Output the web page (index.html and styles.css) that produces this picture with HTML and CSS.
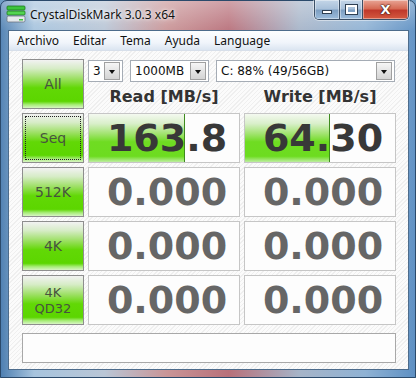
FILE: index.html
```html
<!DOCTYPE html>
<html lang="es">
<head>
  <meta charset="UTF-8">
  <title>CrystalDiskMark 3.0.3 x64</title>
  <link rel="stylesheet" href="styles.css">
</head>
<body>

  <div class="window">
    <div class="titlebar">
      <svg class="app-icon" width="20" height="18" viewBox="0 0 20 18">
        <rect x="1" y="1" width="18" height="4" rx="1" fill="#3cc43c" stroke="#1d7a1d" stroke-width="0.8"/>
        <rect x="1" y="6" width="18" height="4" rx="1" fill="#52d452" stroke="#1d7a1d" stroke-width="0.8"/>
        <rect x="1" y="11" width="18" height="6" rx="1.5" fill="#e4e8ec" stroke="#6a7580" stroke-width="0.8"/>
        <rect x="13" y="14" width="4" height="1.5" fill="#3cc43c"/>
      </svg>
      <span class="title">CrystalDiskMark 3.0.3 x64</span>
      <div class="caption-buttons">
        <div class="cap min"><span></span></div>
        <div class="cap max"><span></span></div>
        <div class="cap close">X</div>
      </div>
    </div>

    <div class="client">
      <div class="menubar">
        <span>Archivo</span>
        <span>Editar</span>
        <span>Tema</span>
        <span>Ayuda</span>
        <span>Language</span>
      </div>

      <div class="panel">
        <div class="grid">
          <div class="test-btn">All</div>
          <div class="options">
            <div class="selects">
              <div class="combo c-count"><span>3</span><i></i></div>
              <div class="combo c-size"><span>1000MB</span><i></i></div>
              <div class="combo c-drive"><span>C: 88% (49/56GB)</span><i></i></div>
            </div>
            <div class="headers">
              <div>Read [MB/s]</div>
              <div>Write [MB/s]</div>
            </div>
          </div>

          <div class="test-btn focus"><span>Seq</span></div>
          <div class="result done"><div class="bar" style="width:96px"></div><span>163.8</span></div>
          <div class="result done"><div class="bar" style="width:85px"></div><span>64.30</span></div>

          <div class="test-btn">512K</div>
          <div class="result"><span>0.000</span></div>
          <div class="result"><span>0.000</span></div>

          <div class="test-btn">4K</div>
          <div class="result"><span>0.000</span></div>
          <div class="result"><span>0.000</span></div>

          <div class="test-btn two">4K<br>QD32</div>
          <div class="result"><span>0.000</span></div>
          <div class="result"><span>0.000</span></div>
        </div>

        <div class="comment"></div>
      </div>
    </div>
  </div>

</body>
</html>
```

FILE: styles.css
```css
* {
  box-sizing: border-box;
}

body {
  margin: 0;
  width: 416px;
  height: 378px;
  overflow: hidden;
  background: #6f9cc4;
}

.window {
  width: 416px;
  height: 378px;
  padding: 29px 6px 9px 7px;
  border: 1px solid #2b4a6b;
  border-radius: 7px 7px 0 0;
  background:
    linear-gradient(180deg, rgba(255, 255, 255, 0.35) 0, rgba(255, 255, 255, 0.05) 30px, rgba(255, 255, 255, 0) 100%),
    linear-gradient(90deg, #4f80b2 0, #a7c4de 8%, #b9c6d6 25%, #c99597 40%, #b8707a 55%, #a6b4c8 72%, #8fb2d4 88%, #5e90c3 100%);
  position: relative;
}

/* title bar */

.titlebar {
  position: absolute;
  top: 0;
  left: 0;
  right: 0;
  height: 29px;
  display: flex;
  align-items: center;
  padding: 0 0 3px 5px;
}

.app-icon {
  flex: none;
}

.title {
  margin-left: 4px;
  font-family: "Noto Sans", sans-serif;
  font-size: 12px;
  color: #111;
  text-shadow: 0 0 6px rgba(255, 255, 255, 0.9), 0 0 3px rgba(255, 255, 255, 0.9);
}

.caption-buttons {
  position: absolute;
  top: -1px;
  right: 6px;
  display: flex;
  height: 20px;
  border: 1px solid #3b4f66;
  border-top: none;
  border-radius: 0 0 5px 5px;
  overflow: hidden;
  box-shadow: 0 0 0 1px rgba(255, 255, 255, 0.45);
}

.cap {
  display: flex;
  align-items: center;
  justify-content: center;
  height: 100%;
  border-left: 1px solid #3b4f66;
  box-shadow: inset 0 0 0 1px rgba(255, 255, 255, 0.4);
  background: linear-gradient(180deg, #c4d6e8 0, #a9c1da 45%, #7d9fc2 55%, #9bbcdc 100%);
}

.cap:first-child {
  border-left: none;
}

.min {
  width: 24px;
}

.min span {
  width: 10px;
  height: 4px;
  margin-top: 5px;
  background: #fff;
  border: 1px solid #2e3f52;
}

.max {
  width: 23px;
}

.max span {
  width: 11px;
  height: 9px;
  border: 2px solid #fff;
  outline: 1px solid #2e3f52;
}

.close {
  width: 46px;
  font-family: "DejaVu Sans", sans-serif;
  font-weight: bold;
  font-size: 13px;
  color: #fff;
  text-shadow: 0 0 1px #3a1a14, 0 0 1px #3a1a14, 0 0 2px #3a1a14;
  background: linear-gradient(180deg, #e8a595 0, #d66b55 45%, #c0392b 55%, #d45a40 100%);
}

/* client area */

.client {
  border: 1px solid #4d6c8c;
  height: 340px;
}

.menubar {
  height: 20px;
  display: flex;
  align-items: center;
  padding-left: 1px;
  background: linear-gradient(180deg, #fdfeff 0, #f1f5fb 60%, #dbe5f1 100%);
  border-bottom: 1px solid #d7dfea;
  font-family: "Noto Sans", sans-serif;
  font-size: 12px;
  color: #111;
}

.menubar span {
  padding: 0 7px;
}

.panel {
  height: 318px;
  padding: 8px 0 0 13px;
  background: repeating-linear-gradient(135deg, #fbfbfb 0, #fbfbfb 2px, #efefef 2px, #efefef 3px);
}

.grid {
  display: grid;
  grid-template-columns: 62px 152px 152px;
  grid-auto-rows: 50px;
  gap: 4px;
}

.test-btn {
  display: flex;
  align-items: center;
  justify-content: center;
  text-align: center;
  border: 1px solid #8e8e8e;
  background: linear-gradient(180deg, #f2f2f2 0, #d6ecc6 18%, #9fe068 38%, #62d806 58%, #5cd600 86%, #a6ec76 93%, #d8f5c4 100%);
  font-family: "DejaVu Sans", sans-serif;
  font-size: 14px;
  color: #47533f;
}

.test-btn.two {
  font-size: 13px;
  line-height: 16px;
  padding-top: 1px;
}

.test-btn.focus {
  position: relative;
}

.test-btn.focus::after {
  content: "";
  position: absolute;
  inset: 2px;
  border: 1px dotted #222;
}

.options {
  grid-column: span 2;
}

.selects {
  display: flex;
  gap: 7px;
  margin-top: 1px;
}

.combo {
  display: flex;
  align-items: center;
  height: 22px;
  padding: 0 2px 0 4px;
  background: #fff;
  border: 1px solid #a5acb5;
  font-family: "DejaVu Sans", sans-serif;
  font-size: 12px;
  color: #111;
}

.combo span {
  flex: 1;
}

.combo i {
  width: 16px;
  height: 18px;
  border: 1px solid #a0a0a0;
  background: linear-gradient(180deg, #f6f6f6 0, #e4e4e4 50%, #d4d4d4 100%);
  position: relative;
}

.combo i::after {
  content: "";
  position: absolute;
  left: 4px;
  top: 7px;
  border-left: 3px solid transparent;
  border-right: 3px solid transparent;
  border-top: 4px solid #111;
}

.c-count {
  width: 35px;
}

.c-size {
  width: 79px;
}

.c-drive {
  width: 179px;
}

.headers {
  display: grid;
  grid-template-columns: 152px 152px;
  gap: 4px;
  margin-top: 5px;
  line-height: 20px;
  text-align: center;
  font-family: "DejaVu Sans", sans-serif;
  font-weight: bold;
  font-size: 16px;
  color: #333;
}

.result {
  position: relative;
  display: flex;
  align-items: center;
  justify-content: center;
  padding-left: 6px;
  background: #fdfdfd;
  border: 1px solid #c6c6c6;
  font-family: "DejaVu Sans", sans-serif;
  font-weight: bold;
  font-size: 38px;
  color: #666;
}

.result span {
  position: relative;
}

.result.done {
  color: #383838;
}

.bar {
  position: absolute;
  left: 0;
  top: 0;
  bottom: 0;
  border-right: 1px solid #3e8b1e;
  background: linear-gradient(180deg, #f4f9f0 0, #d9efca 20%, #9fe36c 42%, #6fdc22 58%, #6ddc20 88%, #bdeea0 100%);
}

.comment {
  width: 374px;
  height: 30px;
  margin-top: 8px;
  background: #fdfdfd;
  border: 1px solid #a8a8a8;
}
```
